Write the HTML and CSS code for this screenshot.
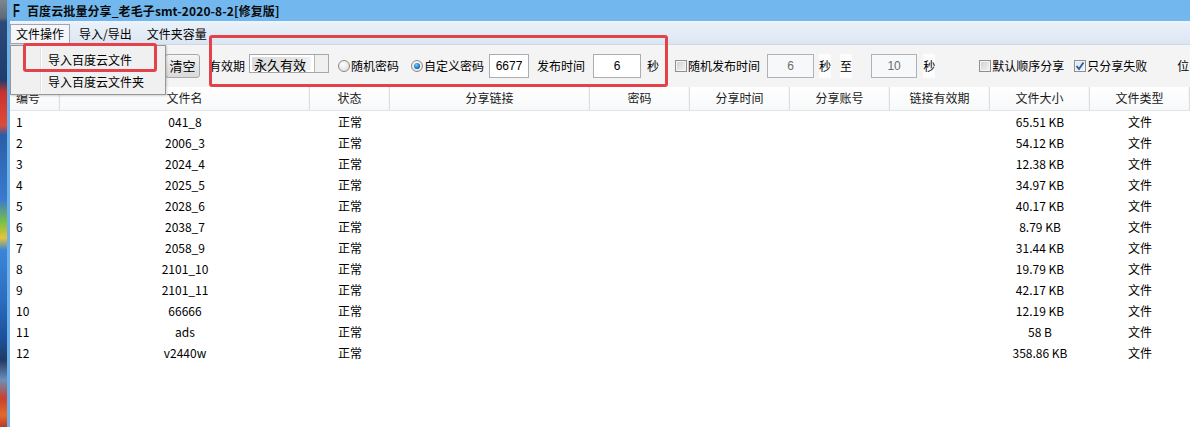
FILE: index.html
```html
<!DOCTYPE html>
<html>
<head>
<meta charset="utf-8">
<link rel="stylesheet" href="styles.css">
</head>
<body>
<div class="screen">
  <div class="desk"></div>
  <div class="win">
    <div class="titlebar"><span class="appicon">F</span><span class="title">百度云批量分享_老毛子smt-2020-8-2[修复版]</span></div>
    <div class="menubar">
      <span class="mi active">文件操作</span>
      <span class="mi">导入/导出</span>
      <span class="mi">文件夹容量</span>
    </div>
    <div class="toolbar">
      <span class="btn">清空</span>
      <span class="lbl ml9">有效期</span>
      <span class="combo ml4"><span class="combo-text">永久有效</span><span class="combo-btn"></span></span>
      <span class="opt ml9"><span class="radio"></span>随机密码</span>
      <span class="opt ml12"><span class="radio on"></span>自定义密码</span>
      <span class="field ml5 w40">6677</span>
      <span class="lbl ml8">发布时间</span>
      <span class="field ml8 w48">6</span>
      <span class="lbl ml6">秒</span>
      <span class="opt ml16"><span class="check"></span>随机发布时间</span>
      <span class="field off ml7 w47">6</span>
      <span class="lbl white ml5">秒</span>
      <span class="lbl white ml9">至</span>
      <span class="field off ml19 w46">10</span>
      <span class="lbl white ml6">秒</span>
      <span class="opt ml44"><span class="check"></span>默认顺序分享</span>
      <span class="opt ml10"><span class="check on"><svg viewBox="0 0 12 12" width="12" height="12"><polyline points="2.5,6 5,9 9.5,2.5" fill="none" stroke="#2f56a8" stroke-width="1.8"/></svg></span>只分享失败</span>
      <span class="lbl ml30">位</span>
    </div>
    <div class="grid">
      <div class="row head">
        <span class="c left">编号</span><span class="c">文件名</span><span class="c">状态</span><span class="c">分享链接</span><span class="c">密码</span><span class="c">分享时间</span><span class="c">分享账号</span><span class="c">链接有效期</span><span class="c">文件大小</span><span class="c">文件类型</span>
      </div>
      <div class="row"><span class="c left">1</span><span class="c">041_8</span><span class="c">正常</span><span class="c"></span><span class="c"></span><span class="c"></span><span class="c"></span><span class="c"></span><span class="c">65.51 KB</span><span class="c">文件</span></div>
      <div class="row"><span class="c left">2</span><span class="c">2006_3</span><span class="c">正常</span><span class="c"></span><span class="c"></span><span class="c"></span><span class="c"></span><span class="c"></span><span class="c">54.12 KB</span><span class="c">文件</span></div>
      <div class="row"><span class="c left">3</span><span class="c">2024_4</span><span class="c">正常</span><span class="c"></span><span class="c"></span><span class="c"></span><span class="c"></span><span class="c"></span><span class="c">12.38 KB</span><span class="c">文件</span></div>
      <div class="row"><span class="c left">4</span><span class="c">2025_5</span><span class="c">正常</span><span class="c"></span><span class="c"></span><span class="c"></span><span class="c"></span><span class="c"></span><span class="c">34.97 KB</span><span class="c">文件</span></div>
      <div class="row"><span class="c left">5</span><span class="c">2028_6</span><span class="c">正常</span><span class="c"></span><span class="c"></span><span class="c"></span><span class="c"></span><span class="c"></span><span class="c">40.17 KB</span><span class="c">文件</span></div>
      <div class="row"><span class="c left">6</span><span class="c">2038_7</span><span class="c">正常</span><span class="c"></span><span class="c"></span><span class="c"></span><span class="c"></span><span class="c"></span><span class="c">8.79 KB</span><span class="c">文件</span></div>
      <div class="row"><span class="c left">7</span><span class="c">2058_9</span><span class="c">正常</span><span class="c"></span><span class="c"></span><span class="c"></span><span class="c"></span><span class="c"></span><span class="c">31.44 KB</span><span class="c">文件</span></div>
      <div class="row"><span class="c left">8</span><span class="c">2101_10</span><span class="c">正常</span><span class="c"></span><span class="c"></span><span class="c"></span><span class="c"></span><span class="c"></span><span class="c">19.79 KB</span><span class="c">文件</span></div>
      <div class="row"><span class="c left">9</span><span class="c">2101_11</span><span class="c">正常</span><span class="c"></span><span class="c"></span><span class="c"></span><span class="c"></span><span class="c"></span><span class="c">42.17 KB</span><span class="c">文件</span></div>
      <div class="row"><span class="c left">10</span><span class="c">66666</span><span class="c">正常</span><span class="c"></span><span class="c"></span><span class="c"></span><span class="c"></span><span class="c"></span><span class="c">12.19 KB</span><span class="c">文件</span></div>
      <div class="row"><span class="c left">11</span><span class="c">ads</span><span class="c">正常</span><span class="c"></span><span class="c"></span><span class="c"></span><span class="c"></span><span class="c"></span><span class="c">58 B</span><span class="c">文件</span></div>
      <div class="row"><span class="c left">12</span><span class="c">v2440w</span><span class="c">正常</span><span class="c"></span><span class="c"></span><span class="c"></span><span class="c"></span><span class="c"></span><span class="c">358.86 KB</span><span class="c">文件</span></div>
    </div>
    <div class="dropdown">
      <div class="dd-item">导入百度云文件</div>
      <div class="dd-item">导入百度云文件夹</div>
    </div>
    <div class="mark mark1"></div>
    <div class="mark mark2"></div>
  </div>
</div>
</body>
</html>
```

FILE: styles.css
```css
* { box-sizing: border-box; margin: 0; padding: 0; }
html, body { width: 1190px; height: 427px; overflow: hidden; background: #fff; }
body {
  font-family: "Noto Sans CJK SC", "Microsoft YaHei", sans-serif;
  font-size: 12px;
  color: #000;
}
.screen { display: flex; height: 427px; }
.desk {
  width: 7px;
  flex: none;
  background: linear-gradient(180deg,
    #7d8590 0px, #5e6a78 18px, #2b4a78 22px, #1d3d6d 80px,
    #c8322e 92px, #e04a3a 125px, #2a5fa8 135px, #3b7ad0 200px,
    #7ac043 222px, #e8c23a 238px, #3a86d8 250px, #2b6dc0 300px,
    #1c4f98 340px, #223a66 360px, #6d8fb8 380px, #c9402c 398px,
    #e36a2d 415px, #b93a2a 427px);
}
.win {
  flex: 1;
  position: relative;
  border-left: 3px solid #6cb2e8;
  display: flex;
  flex-direction: column;
  overflow: hidden;
  background: #fff;
}
.titlebar {
  height: 21px;
  flex: none;
  background: #72b8ee;
  display: flex;
  align-items: center;
  padding-left: 3px;
}
.appicon {
  font-family: "Liberation Sans", sans-serif;
  font-weight: bold;
  font-size: 18px;
  line-height: 18px;
  display: inline-block;
  width: 8px;
  transform: scaleX(0.62);
  transform-origin: left center;
  color: #111;
}
.title {
  margin-left: 6px;
  font-weight: bold;
  font-size: 12px;
  line-height: 18px;
  color: #0a0a0a;
  letter-spacing: 0.1px;
}
.menubar {
  height: 24px;
  flex: none;
  border-top: 2px solid #eef3f9;
  border-bottom: 1px solid #d0d9e5;
  background: linear-gradient(180deg, #e9f0f9 0%, #dce6f2 100%);
  display: flex;
  align-items: flex-end;
}
.mi {
  height: 20px;
  line-height: 18px;
  padding: 0 5px;
  border: 1px solid transparent;
  margin-left: 3px;
  color: #000;
}
.mi.active {
  margin-left: 0;
  border-color: #a2a6ab;
  background: #f4f6f9;
}
.toolbar {
  height: 42px;
  flex: none;
  background: #f4f4f4;
  display: flex;
  align-items: flex-start;
  padding: 9px 0 0 155px;
  white-space: nowrap;
  overflow: hidden;
}
.toolbar > * { flex: none; }
.ml4 { margin-left: 4px; }
.ml5 { margin-left: 5px; }
.ml6 { margin-left: 6px; }
.ml7 { margin-left: 7px; }
.ml8 { margin-left: 8px; }
.ml9 { margin-left: 9px; }
.ml10 { margin-left: 10px; }
.ml12 { margin-left: 12px; }
.ml16 { margin-left: 16px; }
.ml19 { margin-left: 19px; }
.ml30 { margin-left: 30px; }
.ml44 { margin-left: 44px; }
.btn {
  width: 35px;
  height: 24px;
  line-height: 22px;
  text-align: center;
  border: 1px solid #a9a9a9;
  border-radius: 3px;
  background: linear-gradient(180deg, #f6f6f6 0%, #e6e6e6 50%, #dadada 100%);
  font-size: 13px;
}
.lbl {
  height: 24px;
  line-height: 24px;
}
.lbl.white { background: #fdfdfd; }
.combo {
  width: 80px;
  height: 19px;
  border: 1px solid #a4a7ad;
  background: #fff;
  display: flex;
  padding: 2px 0 2px 2px;
}
.combo-text {
  width: 59px;
  flex: none;
  line-height: 15px;
  padding-left: 2px;
  font-size: 13px;
  background: linear-gradient(90deg, #dcdcdc 0%, #e6e6e6 80%, #f3f3f3 100%);
}
.combo-btn {
  flex: none;
  margin-left: 3px;
  width: 14px;
  border-left: 1px solid #b6b6b6;
  margin-top: -2px;
  margin-bottom: -2px;
  background: #f0f0f0;
}
.opt {
  height: 24px;
  line-height: 24px;
  display: flex;
  align-items: center;
}
.radio {
  width: 12px;
  height: 12px;
  flex: none;
  border-radius: 50%;
  border: 1px solid #8a8a8a;
  background: radial-gradient(circle at 40% 35%, #ffffff 0%, #e4e4e4 70%, #cfcfcf 100%);
  margin-right: 1px;
  display: inline-block;
  position: relative;
}
.radio.on::after {
  content: "";
  position: absolute;
  left: 2px;
  top: 2px;
  width: 6px;
  height: 6px;
  border-radius: 50%;
  background: radial-gradient(circle at 40% 35%, #7fd0ff 0%, #1c78c4 55%, #0f3f7a 100%);
}
.check {
  width: 12px;
  height: 12px;
  flex: none;
  border: 1px solid #8e8f8f;
  background: linear-gradient(135deg, #cfcfcf 0%, #e6e6e6 60%, #f4f4f4 100%);
  margin-right: 1px;
  display: inline-flex;
  align-items: center;
  justify-content: center;
  box-shadow: inset 0 0 0 1px #f4f4f4;
}
.check.on { background: linear-gradient(135deg, #dfe6ef 0%, #f0f3f7 100%); }
.check svg { display: block; margin: -1px; }
.field {
  height: 24px;
  line-height: 22px;
  border: 1px solid #abadb3;
  background: #fff;
  text-align: center;
  font-family: "Liberation Sans", sans-serif;
  font-size: 12px;
}
.field.off {
  border-color: #aeb3b9;
  background: #f7f8f9;
  color: #6d6d6d;
}
.w40 { width: 40px; }
.w46 { width: 46px; }
.w47 { width: 47px; }
.w48 { width: 48px; }
.grid { flex: 1; background: #fff; }
.row {
  display: grid;
  grid-template-columns: 50px 250px 80px 200px repeat(6, 100px);
  height: 21px;
  line-height: 21px;
}
.row.head {
  height: 24px;
  line-height: 22px;
  background: linear-gradient(180deg, #ffffff 0%, #f7f8f9 100%);
  border-bottom: 1px solid #e3e4e6;
  color: #1a1a1a;
}
.c { text-align: center; white-space: nowrap; overflow: hidden; }
.c.left { text-align: left; padding-left: 6px; }
.head .c { border-right: 1px solid #dcdde0; box-shadow: inset -1px 0 0 #f6f6f6; }
.dropdown {
  position: absolute;
  left: 0;
  top: 45px;
  width: 156px;
  height: 50px;
  background: #f0f0f0;
  border: 1px solid #979797;
  box-shadow: 1px 1px 2px rgba(0,0,0,0.18);
  padding-top: 3px;
}
.dropdown::before {
  content: "";
  position: absolute;
  left: 29px;
  top: 2px;
  bottom: 2px;
  width: 1px;
  background: #e0e0e0;
  box-shadow: 1px 0 0 #fff;
}
.dd-item {
  height: 22px;
  line-height: 22px;
  padding-left: 37px;
  font-size: 12px;
}
.mark {
  position: absolute;
  border: 3px solid #e4424b;
  border-radius: 3px;
}
.mark1 { left: 13px; top: 43px; width: 134px; height: 29px; }
.mark2 { left: 199px; top: 35px; width: 459px; height: 52px; }
```
